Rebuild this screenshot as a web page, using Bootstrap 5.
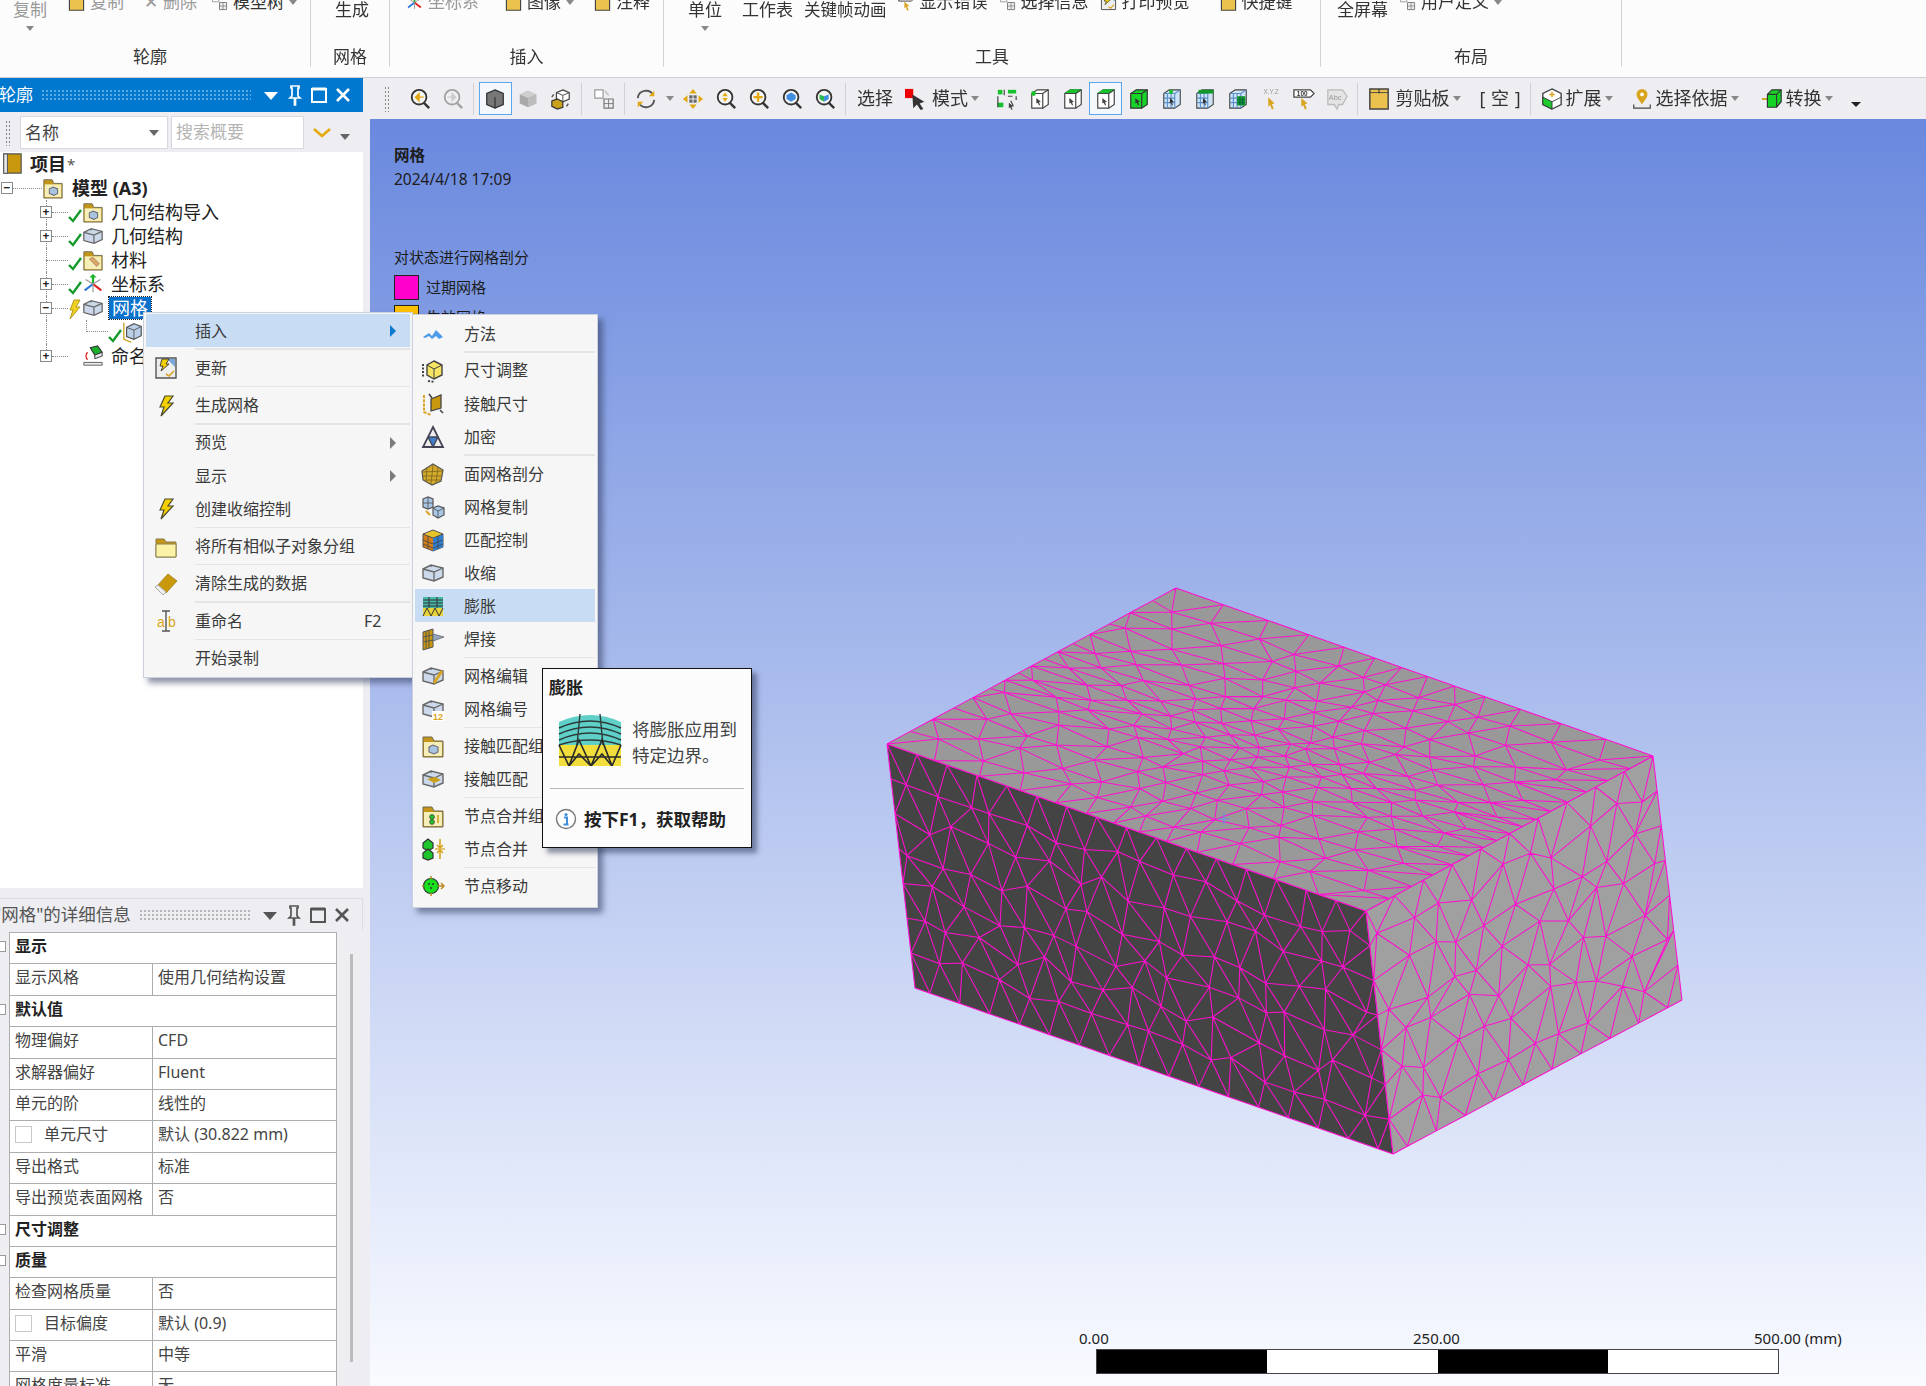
<!DOCTYPE html>
<html lang="zh">
<head>
<meta charset="UTF-8" />
<title>网格 - Mechanical</title>
<link href="https://cdn.jsdelivr.net/npm/bootstrap@5.3.0/dist/css/bootstrap.min.css" rel="stylesheet">
<style>
  html, body { margin: 0; height: 100%; overflow: hidden; background: #eeeef2; }
  body { font-family: "Noto Sans", "Noto Sans CJK SC", sans-serif; color: #333; }
  .app { position: relative; width: 1926px; height: 1386px; overflow: hidden; filter: blur(.4px); }
  .ic { display: block; width: 22px; height: 22px; flex: none; }

  /* ribbon */
  .ribbon { height: 78px; background: #fcfcfc; border-bottom: 1px solid #cfcfd2; flex: none; }
  .rb-group { height: 67px; border-right: 1.5px solid #d4d4d4; flex: none; position: relative; overflow: hidden; }
  .rb-body { height: 46px; font-size: 17px; line-height: 20px; color: #333; white-space: nowrap; }
  .rb-label { font-size: 17px; line-height: 22px; text-align: center; color: #333; }
  .rb-w1 { width: 311px; }
  .rb-w1 .rb-body { padding-left: 13px; }
  .rb-w1 .rb-label { padding-right: 10px; }
  .rb-w2 { width: 79px; }
  .rb-w2 .rb-body { padding-left: 24px; }
  .rb-w3 { width: 274px; }
  .rb-w3 .rb-body { padding-left: 16px; }
  .rb-w4 { width: 657px; }
  .rb-w4 .rb-body { padding-left: 24px; }
  .rb-w5 { width: 301px; }
  .rb-w5 .rb-body { padding-left: 16px; }
  .rb-big { flex: none; }
  .rb-big.tight { font-size: 16.5px; }
  .rb-big .caret-s { margin: 6px auto 0; display: block; }
  .rb-small { margin-top: -8px; display: flex; align-self: flex-start; align-items: center; gap: 5px; flex: none; }
  .rb-small .ic { width: 17px; height: 17px; }
  .rb-dim { color: #999; }
  .gap-a { margin-left: 21px; }
  .gap-b { margin-left: 20px; }
  .gap-c { margin-left: 11px; }
  .gap-d { margin-left: 26px; }
  .gap-g { margin-left: 14px; }
  .gap-h { margin-left: 30px; }
  .caret-s { display: inline-block; width: 0; height: 0; border-left: 4px solid transparent; border-right: 4px solid transparent; border-top: 5px solid #888; flex: none; }

  /* side panels */
  .side { width: 370px; flex: none; background: #eeeef2; }
  .side-col { width: 363px; }
  .pane-title { height: 34px; background: #0078cf; color: #fff; font-size: 17px; padding-right: 8px; overflow: hidden; }
  .pane-title.light { height: 32px; background: #eeeef2; color: #555; margin-top: 10px; border-top: 1px solid #dcdce4; border-right: 1px solid #dcdce4; }
  .pane-name { margin-left: -1px; white-space: nowrap; }
  .pane-title.light .pane-name { margin-left: -6px; font-size: 17.5px; }
  .grip-h { flex: 1; height: 12px; margin: 0 8px; background-image: radial-gradient(currentColor .7px, transparent .8px); background-size: 4px 4px; opacity: .4; }
  .pane-btn { width: 24px; height: 24px; display: block; flex: none; }
  .search-row { height: 40px; padding: 4px 0 3px 5px; }
  .grip-v { width: 6px; height: 26px; background-image: radial-gradient(#888 .7px, transparent .8px); background-size: 3px 4px; flex: none; }
  .fake-sel { background: #fff; border: 1.5px solid #d8d8e2; height: 33px; font-size: 17px; line-height: 29px; padding: 0 8px 0 4px; color: #444; }
  .fake-sel.pick { width: 148px; margin-left: 9px; }
  .fake-sel.find { width: 133px; margin-left: 3px; color: #b5b5b5; }
  .sel-arrow { border-left: 5px solid transparent; border-right: 5px solid transparent; border-top: 6px solid #666; }
  .tree { height: 736px; background: #fff; font-size: 18px; color: #222; padding-top: 0; overflow: hidden; }
  .tr0, .tr1 { height: 24px; line-height: 24px; display: flex; align-items: center; position: relative; white-space: nowrap; }
  .tr0 b, .tr1 b { font-weight: 700; }
  .star { color: #555; font-size: 15px; margin-left: 1px; }
  .tr-root .ic { margin-left: 1px; margin-right: 7px; }
  .tr-model { padding-left: 1px; }
  .tr-model .dash { width: 29px; }
  .tr-model .ic { margin-right: 8px; }
  .tr1 { padding-left: 40px; }
  .tr1::before { content: ""; position: absolute; left: 46px; top: 0; bottom: 0; border-left: 1px dotted #888; }
  .tr1.last::before { bottom: 12px; }
  .tr1 .ic { margin-right: 7px; }
  .tr1 .chk { width: 14px; height: 14px; margin: 8px 0 0 0; }
  .tr1 .chk.bolt { height: 24px; margin: 2px 0 0 0; }
  .xp { width: 12px; height: 12px; border: 1px solid #888; background: #fff; color: #222; font-size: 12px; line-height: 9px; text-align: center; flex: none; position: relative; z-index: 1; font-weight: 700; }
  .dash { width: 16px; border-top: 1px dotted #888; flex: none; }
  .dash.long { width: 22px; margin-left: 6px; }
  .no-chk { width: 14px; flex: none; }
  .tree-sel { background: #0a72cc; color: #fff; outline: 1px dotted #222; padding: 0 3px; margin-left: -2px; line-height: 22px; }
  .tr1.kid { padding-left: 86px; }
  .kid .bend { width: 22px; height: 12px; border-left: 1px dotted #888; border-bottom: 1px dotted #888; margin-top: -12px; flex: none; }

  /* property table */
  .detail-body { position: relative; overflow: hidden; flex: 1; background: #eeeef2; }
  .prop-wrap { margin: 2px 0 0 9px; }
  .prop-table { width: 328px; table-layout: fixed; margin: 0; font-size: 16px; --bs-table-bg: #fff; --bs-table-border-color: #adadad; border-color: #adadad; }
  .prop-table > tbody > tr > td { height: 31.4px; padding: 0 0 0 5px; line-height: 27px; white-space: nowrap; overflow: hidden; border-width: 1.5px; color: #444; }
  .prop-table > tbody > tr > td.grp { font-weight: 700; color: #222; overflow: visible; position: relative; }
  .prop-c1 { width: 143px; }
  .grp-box { position: absolute; left: -15px; top: 8px; width: 11px; height: 11px; border: 1px solid #999; background: #fff; }
  .chk-row { display: flex; align-items: center; }
  .chk-box { width: 17px; height: 17px; border: 1px solid #c9c9c9; background: #fff; margin-right: 12px; flex: none; }
  .v-scroll { width: 3px; height: 408px; background: #bcbcbc; margin: 24px 0 0 13px; flex: none; }

  /* toolbar */
  .stage { flex: 1; min-width: 0; }
  .toolbar { height: 41px; background: #eeeef2; flex: none; font-size: 18px; color: #333; white-space: nowrap; }
  .tb-i { width: 33px; height: 33px; display: flex; align-items: center; justify-content: center; flex: none; }
  .tb-i.on { outline: 1.5px solid #5aa7f0; outline-offset: -1px; background: #f4f8fd; }
  .tb-sep { width: 1px; height: 32px; background: #d0d0d6; margin: 0 5px 0 3.5px; flex: none; }
  .tb-t { flex: none; }
  .tb-t.pad { padding: 0 6px; }
  .tb-arrow { width: 14px; display: flex; justify-content: center; flex: none; }
  .tb-end { margin: 12px 0 0 15px; border-left: 5px solid transparent; border-right: 5px solid transparent; border-top: 5px solid #222; flex: none; }
  .bk-space { margin-left: 16px; width: 40px; word-spacing: 1px; }
  .pull-a { margin-left: -3px; }
  .gap-e { margin-left: 10px; }
  .gap-f { margin-left: 14px; }
  .gap-i { margin-left: 10px; }

  /* viewport */
  .viewport { position: relative; flex: 1; background: linear-gradient(#6a89de, #f9fbff); overflow: hidden; font-size: 15px; color: #1c1c1c; padding: 24px 0 0 24px; }
  .vp-name { font-size: 15.5px; font-weight: 700; line-height: 24px; }
  .vp-date { font-size: 15.5px; line-height: 24px; }
  .vp-status { margin-top: 55px; line-height: 22px; font-size: 15px; }
  .swatch { width: 25px; height: 25px; border: 1.5px solid #222; flex: none; margin-right: 7px; }
  .swatch.pink { background: #ff00cc; }
  .swatch.amber { background: #ffc000; }
  .legend-row { margin-top: 5px; height: 25px; font-size: 15px; }
  .legend-row.first { margin-top: 7px; }
  .mesh { position: absolute; left: 0; top: 0; width: 100%; height: 100%; }
  .scale-bar { position: absolute; left: 726px; top: 1230px; width: 683px; height: 25px; border: 1px solid #444; display: flex; }
  .seg { flex: 1; }
  .seg.dark { background: #000; }
  .seg.pale { background: #fff; }
  .scale-lbl { position: absolute; top: 1209px; font-size: 15px; line-height: 20px; color: #222; white-space: nowrap; }
  .lb-0 { left: 709px; }
  .lb-1 { left: 1043px; }
  .lb-2 { left: 1384px; }

  /* context menus */
  .cm { position: absolute; margin: 0; padding: 1px 2px; min-width: 0; display: block; background: #f6f6f6; border: 1px solid #cdd1dc; border-radius: 0; box-shadow: 5px 5px 6px rgba(50,60,95,.55); font-size: 16px; color: #3a3a3a; list-style: none; }
  .cm-main { left: 143px; top: 312px; width: 270px; height: 366px; z-index: 5; }
  .cm-sub { left: 412px; top: 314px; width: 186px; height: 594px; z-index: 6; padding-top: 2px; }
  .cm-row { height: 33.2px; display: flex; align-items: center; position: relative; white-space: nowrap; }
  .cm-sub .cm-row { height: 33.1px; }
  .cm-main .cm-row { padding-left: 49px; }
  .cm-sub .cm-row { padding-left: 49px; }
  .cm-row.hot { background: #c8dcf3; }
  .cm-ico { position: absolute; width: 24px; height: 24px; top: 5px; }
  .cm-main .cm-ico { left: 8px; }
  .cm-sub .cm-ico { left: 6px; }
  .cm-more { position: absolute; right: 14px; top: 11px; border-top: 6px solid transparent; border-bottom: 6px solid transparent; border-left: 6px solid #7b7b7b; }
  .hot .cm-more { border-left-color: #0a7ad0; }
  .cm-key { position: absolute; left: 218px; }
  .cm-sep { height: 4.1px; display: flex; align-items: center; margin-left: 49px; }
  .cm-sub .cm-sep { height: 3.8px; margin-left: 49px; }
  .cm-sep::after { content: ""; display: block; width: 100%; height: 1.5px; background: #e5e5e5; }

  /* tooltip */
  .tip { position: absolute; left: 542px; top: 668px; width: 210px; height: 180px; background: #fcfcfc; border: 1.5px solid #111; box-shadow: 5px 5px 5px rgba(50,60,95,.55); z-index: 7; padding: 7px 6px; font-size: 17.5px; color: #444; }
  .tip-title { font-weight: 700; color: #222; line-height: 24px; font-size: 17px; }
  .tip-main { margin: 11px 0 0 9px; gap: 10px; }
  .tip-img { width: 64px; height: 55px; flex: none; display: block; }
  .tip-text { line-height: 26px; margin-top: 5px; }
  .tip-line { border-top: 1.5px solid #b9b9b9; margin: 20px 1px 0; }
  .tip-help { margin: 18px 0 0 6px; font-weight: 700; color: #222; font-size: 17.5px; line-height: 24px; white-space: nowrap; gap: 7px; }
  .tip-help svg { width: 22px; height: 22px; flex: none; }
</style>
</head>
<body>

<!-- icon sheet -->
<svg width="0" height="0" class="d-none">
  <defs>
    <symbol id="i-check" viewBox="0 0 14 14"><path d="M1 8l4 4 8-11" fill="none" stroke="#159a2c" stroke-width="2.4"/></symbol>
    <symbol id="i-bolt" viewBox="0 0 24 24"><path d="M11 2h8l-5 7h5L7 22l3-9H6z" fill="#f5d000" stroke="#4a4a30" stroke-width="1.2"/></symbol>
    <symbol id="i-boltsm" viewBox="0 0 14 24"><path d="M6 3h6L8 10h4L2 22l3-9H2z" fill="#f0d020" stroke="#b59a20" stroke-width="1"/></symbol>
    <symbol id="i-box" viewBox="0 0 24 24"><path d="M2 8l8-4 12 3v9l-9 4-11-3z" fill="#cbd9ea" stroke="#666" stroke-width="1.4"/><path d="M2 8l11 3 9-4M13 11v9M10 4v2" fill="none" stroke="#666" stroke-width="1.3"/></symbol>
    <symbol id="i-cube" viewBox="0 0 24 24"><path d="M12 2l9 4v12l-9 4-9-4V6z" fill="#c9d8ea" stroke="#666" stroke-width="1.4"/><path d="M3 6l9 4 9-4M12 10v12" fill="none" stroke="#666" stroke-width="1.3"/></symbol>
    <symbol id="i-cube-dk" viewBox="0 0 24 24"><path d="M12 2l9 4v12l-9 4-9-4V6z" fill="#777" stroke="#333" stroke-width="1.4"/><path d="M3 6l9 4 9-4v0l-9 4z" fill="#aaa"/><path d="M12 10v12" stroke="#333" stroke-width="1.3"/></symbol>
    <symbol id="i-cube-gr" viewBox="0 0 24 24"><path d="M12 3l9 4v10l-9 4-9-4V7z" fill="#a9a9a9"/><path d="M3 7l9 4 9-4-9-4z" fill="#cfcfcf"/><path d="M12 11v10l9-4V7z" fill="#bcbcbc"/></symbol>
    <symbol id="i-cube-set" viewBox="0 0 24 24"><path d="M14 2l7 3v7l-7 3-7-3V5z" fill="#fff" stroke="#444" stroke-width="1.3"/><path d="M7 5l7 3 7-3M14 8v7" fill="none" stroke="#444"/><path d="M8 12l6 3v6l-6 2-6-3v-6z" fill="#c9a11a" stroke="#333" stroke-width="1.3"/><path d="M20 17l-2 3M4 7L2 10" stroke="#555" stroke-width="1.6"/></symbol>
    <symbol id="i-folder" viewBox="0 0 24 24"><path d="M2 7V4h8l2 3h10v15H2z" fill="#c4951a" stroke="#8a7a45"/><path d="M2 9h20v13H2z" fill="#fbf2a8" stroke="#8a8050"/></symbol>
    <symbol id="i-foldbox" viewBox="0 0 24 24"><path d="M2 7V3h9l2 4h9v16H2z" fill="#c4951a" stroke="#6f6a50"/><path d="M3 8h18v14H3z" fill="#f6eeb8"/><path d="M8 13l4-2 5 2v5l-4 2-5-2z" fill="#a9c4e0" stroke="#667" stroke-width="1.1"/></symbol>
    <symbol id="i-foldpen" viewBox="0 0 24 24"><path d="M2 7V3h9l2 4h9v16H2z" fill="#c4951a" stroke="#6f6a50"/><path d="M3 8h18v14H3z" fill="#f6eeb8"/><path d="M8 11l8 8 3-3-7-7z" fill="#d9a56a" stroke="#a98050" stroke-width=".8"/></symbol>
    <symbol id="i-foldnode" viewBox="0 0 24 24"><path d="M2 7V3h9l2 4h9v16H2z" fill="#c4951a" stroke="#6f6a50"/><path d="M3 8h18v14H3z" fill="#f6eeb8"/><circle cx="11" cy="13" r="2.4" fill="#21c32b" stroke="#333" stroke-width=".7"/><circle cx="11" cy="18" r="2.4" fill="#21c32b" stroke="#333" stroke-width=".7"/><path d="M17 11v8" stroke="#c9a11a" stroke-width="1.5"/></symbol>
    <symbol id="i-book" viewBox="0 0 22 24"><path d="M2 1h19v21H2z" fill="#c9980c" stroke="#555" stroke-width="1.3"/><path d="M2 1h4v21H2z" fill="#e9e9e9" stroke="#555" stroke-width="1.1"/></symbol>
    <symbol id="i-axes" viewBox="0 0 24 24"><path d="M12 12V3" stroke="#19b32b" stroke-width="2.4"/><path d="M8 5l4-4 4 4z" fill="#19b32b"/><path d="M12 12L3 19" stroke="#2f78e0" stroke-width="2.4"/><path d="M12 12l9 7" stroke="#e02222" stroke-width="2.4"/><path d="M12 12L4 7M12 12l8-5M12 12v9" stroke="#999" stroke-width="1.3"/></symbol>
    <symbol id="i-named" viewBox="0 0 24 24"><path d="M9 3l8-2 5 7-8 3z" fill="#19b32b" stroke="#333" stroke-width="1.2"/><path d="M14 11l8-3v4l-8 3z" fill="#e8e8e8" stroke="#333"/><path d="M2 19h20v3H2z" fill="#eee" stroke="#555"/><path d="M6 8a6 6 0 0 0 0 8" fill="none" stroke="#d22" stroke-width="1.6"/></symbol>
    <symbol id="i-childmesh" viewBox="0 0 24 24"><path d="M2 2v18l8 3" fill="none" stroke="#c9a11a" stroke-width="1.4"/><path d="M13 3l8 3v10l-8 4-8-3V7z" fill="#b9d0e8" stroke="#555" stroke-width="1.3"/><path d="M5 7l8 3 8-4M13 10v10" fill="none" stroke="#555"/></symbol>

    <symbol id="i-mag" viewBox="0 0 24 24"><circle cx="11" cy="10" r="8" fill="#f5f5f5" stroke="#333" stroke-width="2"/><path d="M16 16l6 6" stroke="#333" stroke-width="2.6"/></symbol>
    <symbol id="i-zoom-l" viewBox="0 0 24 24"><use href="#i-mag"/><path d="M16 10H8M11 6l-4 4 4 4z" fill="#e2a80e" stroke="#e2a80e" stroke-width="1.4"/></symbol>
    <symbol id="i-zoom-r" viewBox="0 0 24 24"><g opacity=".4"><use href="#i-mag"/><path d="M6 10h8M11 6l4 4-4 4z" fill="#999" stroke="#999" stroke-width="1.4"/></g></symbol>
    <symbol id="i-zoom-ud" viewBox="0 0 24 24"><use href="#i-mag"/><path d="M11 5l3 4H8zM11 15l3-4H8z" fill="#e2a80e"/></symbol>
    <symbol id="i-zoom-plus" viewBox="0 0 24 24"><use href="#i-mag"/><path d="M11 5v10M6 10h10" stroke="#e2a80e" stroke-width="2.6"/></symbol>
    <symbol id="i-zoom-blue" viewBox="0 0 24 24"><use href="#i-mag"/><path d="M11 5l5 3v4l-5 3-5-3V8z" fill="#3f8ee0"/></symbol>
    <symbol id="i-zoom-green" viewBox="0 0 24 24"><use href="#i-mag"/><path d="M6 7l5 2v6l-5-3z" fill="#2cb84a"/><path d="M16 7l-5 2v6l5-3z" fill="#3f8ee0"/></symbol>
    <symbol id="i-views" viewBox="0 0 24 24"><path d="M2 2h9v9H2z" fill="#fff" stroke="#999" stroke-width="1.3"/><path d="M12 12h10v10H12z" fill="#eee" stroke="#777" stroke-width="1.3"/><path d="M17 12v10M12 17h10" stroke="#777"/><path d="M13 3l4 5" stroke="#bbb" stroke-width="1.4"/></symbol>
    <symbol id="i-rotate" viewBox="0 0 24 24"><path d="M3 11a9 9 0 0 1 17-3" fill="none" stroke="#555" stroke-width="2"/><path d="M21 13a9 9 0 0 1-17 3" fill="none" stroke="#555" stroke-width="2"/><path d="M21 3v6h-6zM3 21v-6h6z" fill="#e2a80e"/></symbol>
    <symbol id="i-pan" viewBox="0 0 24 24"><path d="M12 1l4 5H8zM12 23l4-5H8zM1 12l5-4v8zM23 12l-5-4v8z" fill="#e2a80e"/><path d="M8 8h8v8H8z" fill="#666"/><path d="M12 8v8M8 12h8" stroke="#fff"/></symbol>
    <symbol id="i-cursor" viewBox="0 0 24 24"><path d="M0 1h9v10H0z" fill="#ee0000"/><path d="M8 7l13 8-5 2 4 6-3 1-4-6-4 4z" fill="#333"/></symbol>
    <symbol id="i-sel-v" viewBox="0 0 24 24"><path d="M2 2h5v5H2z" fill="#16c22b"/><path d="M13 2h9v4h-9z" fill="#16c22b"/><path d="M2 16h6v5H2z" fill="#16c22b"/><path d="M2 9v12M9 2v6M16 14l3 6M22 9v4M13 9h5" stroke="#444" stroke-width="1.3" fill="none"/><path d="M14 16l5 4-2 .5 1 3-1 .5-1.5-3-1.5 1z" fill="#444"/></symbol>
    <symbol id="i-sel-e" viewBox="0 0 24 24"><path d="M3 6l6-4h12v16l-6 4H3z" fill="#fff" stroke="#444" stroke-width="1.3"/><path d="M3 6h12v16M15 6l6-4" fill="none" stroke="#444" stroke-width="1.3"/><circle cx="5" cy="6" r="2.6" fill="#16c22b"/><path d="M8 11l5 4-2 .5 1 3-1 .5-1.5-3-1.5 1z" fill="#444"/></symbol>
    <symbol id="i-sel-f" viewBox="0 0 24 24"><path d="M3 6l6-4h12v16l-6 4H3z" fill="#fff" stroke="#444" stroke-width="1.3"/><path d="M3 6l6-4h12l-6 4z" fill="#16c22b" stroke="#16c22b"/><path d="M3 6h12v16M15 6l6-4" fill="none" stroke="#444" stroke-width="1.3"/><path d="M8 11l5 4-2 .5 1 3-1 .5-1.5-3-1.5 1z" fill="#444"/></symbol>
    <symbol id="i-sel-b" viewBox="0 0 24 24"><path d="M3 6l6-4h12v16l-6 4H3z" fill="#16d428" stroke="#333" stroke-width="1.3"/><path d="M3 6h12v16M15 6l6-4" fill="none" stroke="#333" stroke-width="1.3"/><path d="M8 11l5 4-2 .5 1 3-1 .5-1.5-3-1.5 1z" fill="#333"/></symbol>
    <symbol id="i-sel-m1" viewBox="0 0 24 24"><path d="M3 6l6-4h12v16l-6 4H3z" fill="#cfe3f6" stroke="#444" stroke-width="1.2"/><path d="M7 6v16M11 6v16M3 11h12M3 16h12M15 6l6-4M15 6v16M3 6h12" fill="none" stroke="#5b8fc9" stroke-width="1.2"/><path d="M9 2h4v4H9z" fill="#16c22b"/><path d="M10 11l4 4-2 .5 1 3-1 .5-1-3-1.5 1z" fill="#333"/></symbol>
    <symbol id="i-sel-m2" viewBox="0 0 24 24"><path d="M3 6l6-4h12v16l-6 4H3z" fill="#cfe3f6" stroke="#444" stroke-width="1.2"/><path d="M7 6v16M11 6v16M3 11h12M3 16h12M15 6l6-4M15 6v16M3 6h12" fill="none" stroke="#5b8fc9" stroke-width="1.2"/><path d="M5 2h16v4H5z" fill="#0f9a25"/><path d="M10 11l4 4-2 .5 1 3-1 .5-1-3-1.5 1z" fill="#333"/></symbol>
    <symbol id="i-sel-m3" viewBox="0 0 24 24"><path d="M3 6l6-4h12v16l-6 4H3z" fill="#cfe3f6" stroke="#444" stroke-width="1.2"/><path d="M7 6v16M11 6v16M3 11h12M3 16h12M15 6l6-4M15 6v16M3 6h12" fill="none" stroke="#5b8fc9" stroke-width="1.2"/><path d="M11 9h9v10h-9z" fill="#0f9a25"/><path d="M14 9v10M17 9v10M11 13h9M11 16h9" stroke="#055" stroke-width=".7"/></symbol>
    <symbol id="i-xyz" viewBox="0 0 24 24"><text x="12" y="7" font-size="7" text-anchor="middle" font-family="Liberation Sans, sans-serif" fill="#999">X.Y.Z</text><path d="M9 10l7 7-3 .5 2 5-2 1-2-5-2 2z" fill="#d9a520"/></symbol>
    <symbol id="i-tag100" viewBox="0 0 24 24"><path d="M1 2h18l4 4-4 4H1z" fill="#fff" stroke="#444" stroke-width="1.4"/><text x="10" y="8.5" font-size="7" font-weight="700" text-anchor="middle" font-family="Liberation Sans, sans-serif" fill="#333">100</text><path d="M9 11l7 6-3 .5 2 5-2 1-2-5-2 2z" fill="#d9a520"/></symbol>
    <symbol id="i-abc" viewBox="0 0 24 24"><path d="M2 2h16l5 7-5 9h-4l-2 5-3-5H2z" fill="#e4e4e4" stroke="#bbb" stroke-width="1.4"/><text x="10" y="13" font-size="8" text-anchor="middle" font-family="Liberation Sans, sans-serif" fill="#999">Abc</text></symbol>
    <symbol id="i-clip" viewBox="0 0 24 24"><path d="M2 1h20v22H2z" fill="#ecc24e" stroke="#444" stroke-width="1.6"/><path d="M2 5h20" stroke="#444" stroke-width="1"/><path d="M12 1v5" stroke="#444" stroke-width="1.4"/></symbol>
    <symbol id="i-ext" viewBox="0 0 24 24"><path d="M12 1l10 5v12l-10 5-10-5V6z" fill="#fff" stroke="#444" stroke-width="1.5"/><path d="M2 10l10 5v8l-10-5z" fill="#1fcc2e" stroke="#333"/><path d="M12 15l10-5" stroke="#444"/><path d="M12 4v6M9 7h6" stroke="#d9a520" stroke-width="1.6"/></symbol>
    <symbol id="i-pin" viewBox="0 0 24 24"><path d="M12 1a6 6 0 0 1 6 6c0 4-4 7-6 11-2-4-6-7-6-11a6 6 0 0 1 6-6z" fill="#d9a520"/><circle cx="12" cy="7" r="2" fill="#fff"/><path d="M3 18v4h18v-4" fill="none" stroke="#444" stroke-width="1.3"/></symbol>
    <symbol id="i-conv" viewBox="0 0 24 24"><path d="M1 12h6" stroke="#c9a11a" stroke-width="2"/><path d="M7 7l5-5h10v13l-5 6H7z" fill="#15d426" stroke="#333" stroke-width="1.3"/><path d="M7 7h10v14M17 7l5-5" fill="none" stroke="#333" stroke-width="1.2"/></symbol>
    <symbol id="i-chev" viewBox="0 0 20 12"><path d="M2 2l8 7 8-7" fill="none" stroke="#e5a90e" stroke-width="2.6"/></symbol>

    <symbol id="i-update" viewBox="0 0 24 24"><path d="M2 2h20v20H2z" fill="#eee" stroke="#555" stroke-width="1.4"/><path d="M13 3h8v8z" fill="#78a8dc"/><path d="M8 3h7l-3 5h3L7 15l2-5H6z" fill="#f5d000" stroke="#333" stroke-width=".9"/><path d="M12 18l3 2 5-5" fill="none" stroke="#d9a520" stroke-width="1.6"/></symbol>
    <symbol id="i-eraser" viewBox="0 0 24 24"><path d="M14 2l9 7-11 12-9-7z" fill="#c9980c" stroke="#a98a2a"/><path d="M1 15l3-2 8 7-3 3z" fill="#eee" stroke="#aaa"/></symbol>
    <symbol id="i-rename" viewBox="0 0 24 24"><text x="3" y="18" font-size="14" font-family="Liberation Sans, sans-serif" fill="#d9a520">a</text><text x="14" y="18" font-size="14" font-family="Liberation Sans, sans-serif" fill="#d9a520">b</text><path d="M8 2h8M8 22h8M12 2v20" stroke="#555" stroke-width="1.4"/></symbol>
    <symbol id="i-method" viewBox="0 0 24 24"><path d="M2 15l6-4 3 3 4-6 7 7-4 2-3-3-4 3-3-3-4 2z" fill="#4a9bea"/></symbol>
    <symbol id="i-sizing" viewBox="0 0 24 24"><path d="M13 2l8 4v10l-8 4-7-4V6z" fill="#f7e463" stroke="#444" stroke-width="1.4"/><path d="M6 6l7 4 8-4M13 10v10" fill="none" stroke="#444"/><path d="M2 5v14M7 22l7 1" stroke="#444" stroke-width="2" stroke-dasharray="2 1.5"/></symbol>
    <symbol id="i-csize" viewBox="0 0 24 24"><path d="M3 3v17l7 3" fill="none" stroke="#d9a520" stroke-width="2" stroke-dasharray="3 1.2"/><path d="M10 7l10-4v13l-10 3z" fill="#c9980c" stroke="#444" stroke-width="1.3"/><path d="M8 2l3 4M19 18l3 3" stroke="#444" stroke-width="1.6"/></symbol>
    <symbol id="i-refine" viewBox="0 0 24 24"><path d="M12 2l10 20H2z" fill="#eee" stroke="#445" stroke-width="1.8"/><path d="M7 12h10l-5 10z" fill="#3f7ec8"/><path d="M7 12h10M7 12l5 10 5-10" fill="none" stroke="#445" stroke-width="1.3"/></symbol>
    <symbol id="i-face" viewBox="0 0 24 24"><path d="M12 2l10 6-2 11-9 4-9-5-1-9z" fill="#d4aa2a" stroke="#555" stroke-width="1.2"/><path d="M6 5l-1 15M12 3l-2 19M17 5l-2 16M2 10l20-1M2 14l19 0M4 18l15 0" stroke="#7a6420" stroke-width=".8"/></symbol>
    <symbol id="i-copy" viewBox="0 0 24 24"><path d="M2 4l5-2 5 2v8l-5 2-5-2z" fill="#a9c8e8" stroke="#555" stroke-width="1.2"/><path d="M12 13l5-2 6 2v7l-6 3-5-3z" fill="#a9c8e8" stroke="#555" stroke-width="1.2"/><path d="M7 2v12M12 13l5 3 6-3M17 16v7M2 8h10" fill="none" stroke="#555" stroke-width=".9"/><path d="M5 16l4 4" stroke="#d9a520" stroke-width="2"/></symbol>
    <symbol id="i-match" viewBox="0 0 24 24"><path d="M2 6v13l10 4 10-4V6z" fill="#d07d1a" stroke="#555"/><path d="M12 10v13l10-4V6z" fill="#2f7ed0"/><path d="M2 6l10-4 10 4-10 4z" fill="#e8c42a" stroke="#555"/><path d="M7 8v13M17 8v13M2 12l10 4 10-4M2 16l10 4 10-4" stroke="#444" stroke-width=".8" fill="none"/></symbol>
    <symbol id="i-inflate" viewBox="0 0 24 24"><path d="M2 3h20v11H2z" fill="#45b8a8"/><path d="M2 6h20M2 9h20M2 12h20M8 3v11M16 3v11" stroke="#333" stroke-width="1"/><path d="M2 14h20v8H2z" fill="#e9d43a"/><path d="M2 22l4-8 4 8 4-8 4 8 4-8" fill="none" stroke="#333" stroke-width="1"/></symbol>
    <symbol id="i-weld" viewBox="0 0 24 24"><path d="M2 5l10-3v18L2 23z" fill="#c9980c" stroke="#555"/><path d="M5 4v18M8 3v18M2 10l10-2M2 15l10-2" stroke="#555"/><path d="M12 7l11 3-11 4z" fill="#8fa8bf" stroke="#666" stroke-width=".8"/></symbol>
    <symbol id="i-medit" viewBox="0 0 24 24"><use href="#i-box"/><path d="M13 19l8-12" stroke="#d9a520" stroke-width="3"/></symbol>
    <symbol id="i-mnum" viewBox="0 0 24 24"><use href="#i-box"/><path d="M11 14h13v10H11z" fill="#fff"/><text x="17" y="23" font-size="9" font-weight="700" text-anchor="middle" font-family="Liberation Sans, sans-serif" fill="#d9a520">12</text></symbol>
    <symbol id="i-cmatch" viewBox="0 0 24 24"><use href="#i-box"/><path d="M6 12l8-2 6 3-7 3z" fill="#c9a11a"/></symbol>
    <symbol id="i-nmerge" viewBox="0 0 24 24"><path d="M7 2l5 4v5l-5 3-5-3V6z" fill="#1fc62b" stroke="#333" stroke-width="1.2"/><path d="M7 12l5 4v5l-5 2-5-2v-5z" fill="#1fc62b" stroke="#333" stroke-width="1.2"/><path d="M19 2v8M16 8l3 3 3-3M19 22v-8M16 16l3-3 3 3" fill="none" stroke="#d9a520" stroke-width="1.6"/><path d="M14 12h10" stroke="#d9a520" stroke-width="1.2"/></symbol>
    <symbol id="i-nmove" viewBox="0 0 24 24"><circle cx="10" cy="12" r="7.5" fill="#18e01e" stroke="#333" stroke-width="1.2"/><path d="M10 2v3M10 19v3M1 12h2M17 12h6M20 9l3 3-3 3" fill="none" stroke="#b98a20" stroke-width="1.5"/><circle cx="8" cy="10" r="1" fill="#333"/><circle cx="12" cy="10" r="1" fill="#333"/><circle cx="10" cy="14" r="1" fill="#333"/></symbol>

    <symbol id="i-pnl-arrow" viewBox="0 0 24 24"><path d="M5 9h14l-7 8z" fill="currentColor"/></symbol>
    <symbol id="i-pnl-pin" viewBox="0 0 24 24"><path d="M8 3h8v2h-1v8l2 2H7l2-2V5H8zM11.5 15h1v7h-1z" fill="none" stroke="currentColor" stroke-width="1.7"/></symbol>
    <symbol id="i-pnl-max" viewBox="0 0 24 24"><path d="M5 6h14v13H5z" fill="none" stroke="currentColor" stroke-width="2"/><path d="M5 6h14" stroke="currentColor" stroke-width="3"/></symbol>
    <symbol id="i-pnl-x" viewBox="0 0 24 24"><path d="M6 6l12 12M18 6L6 18" stroke="currentColor" stroke-width="2.6"/></symbol>
  </defs>
</svg>

<div class="app d-flex flex-column">

  <!-- ribbon, scrolled off at the top in the shot -->
  <header class="ribbon d-flex">
    <div class="rb-group rb-w1">
      <div class="rb-body d-flex">
        <div class="rb-big rb-dim">复制<span class="caret-s"></span></div>
        <div class="rb-small rb-dim gap-a"><svg class="ic"><use href="#i-clip"/></svg>复制</div>
        <div class="rb-small rb-dim gap-b"><span>✕</span>删除</div>
        <div class="rb-small gap-g"><svg class="ic"><use href="#i-views"/></svg>模型树<span class="caret-s"></span></div>
      </div>
      <div class="rb-label">轮廓</div>
    </div>
    <div class="rb-group rb-w2">
      <div class="rb-body"><div class="rb-big">生成</div></div>
      <div class="rb-label">网格</div>
    </div>
    <div class="rb-group rb-w3">
      <div class="rb-body d-flex">
        <div class="rb-small rb-dim"><svg class="ic"><use href="#i-axes"/></svg>坐标系</div>
        <div class="rb-small gap-d"><svg class="ic"><use href="#i-clip"/></svg>图像<span class="caret-s"></span></div>
        <div class="rb-small gap-b"><svg class="ic"><use href="#i-clip"/></svg>注释</div>
      </div>
      <div class="rb-label">插入</div>
    </div>
    <div class="rb-group rb-w4">
      <div class="rb-body d-flex">
        <div class="rb-big">单位<span class="caret-s"></span></div>
        <div class="rb-big gap-b">工作表</div>
        <div class="rb-big tight gap-c">关键帧动画</div>
        <div class="rb-small gap-c"><svg class="ic"><use href="#i-tag100"/></svg>显示错误</div>
        <div class="rb-small gap-c"><svg class="ic"><use href="#i-views"/></svg>选择信息</div>
        <div class="rb-small gap-c"><svg class="ic"><use href="#i-update"/></svg>打印预览</div>
        <div class="rb-small gap-h"><svg class="ic"><use href="#i-clip"/></svg>快捷键</div>
      </div>
      <div class="rb-label">工具</div>
    </div>
    <div class="rb-group rb-w5">
      <div class="rb-body d-flex">
        <div class="rb-big">全屏幕</div>
        <div class="rb-small gap-c"><svg class="ic"><use href="#i-views"/></svg>用户定义<span class="caret-s"></span></div>
      </div>
      <div class="rb-label">布局</div>
    </div>
  </header>

  <div class="d-flex flex-grow-1" style="min-height:0">
    <!-- left side: outline + details -->
    <aside class="side d-flex flex-column">
      <div class="side-col d-flex flex-column h-100">
        <div class="pane-title d-flex align-items-center">
          <span class="pane-name">轮廓</span>
          <span class="grip-h"></span>
          <svg class="pane-btn"><use href="#i-pnl-arrow"/></svg>
          <svg class="pane-btn"><use href="#i-pnl-pin"/></svg>
          <svg class="pane-btn"><use href="#i-pnl-max"/></svg>
          <svg class="pane-btn"><use href="#i-pnl-x"/></svg>
        </div>
        <div class="search-row d-flex align-items-center">
          <span class="grip-v"></span>
          <div class="fake-sel pick d-flex align-items-center justify-content-between">名称<span class="sel-arrow"></span></div>
          <div class="fake-sel find">搜索概要</div>
          <svg class="ms-2" width="20" height="12"><use href="#i-chev"/></svg>
          <span class="sel-arrow ms-2 mt-2"></span>
        </div>
        <div class="tree">
          <div class="tr0 tr-root"><svg class="ic"><use href="#i-book"/></svg><b>项目</b><span class="star">*</span></div>
          <div class="tr0 tr-model"><span class="xp">&minus;</span><span class="dash"></span><svg class="ic"><use href="#i-foldbox"/></svg><b>模型 (A3)</b></div>
          <div class="tr1"><span class="xp">+</span><span class="dash"></span><svg class="ic chk"><use href="#i-check"/></svg><svg class="ic"><use href="#i-foldbox"/></svg>几何结构导入</div>
          <div class="tr1"><span class="xp">+</span><span class="dash"></span><svg class="ic chk"><use href="#i-check"/></svg><svg class="ic"><use href="#i-box"/></svg>几何结构</div>
          <div class="tr1"><span class="dash long"></span><svg class="ic chk"><use href="#i-check"/></svg><svg class="ic"><use href="#i-foldpen"/></svg>材料</div>
          <div class="tr1"><span class="xp">+</span><span class="dash"></span><svg class="ic chk"><use href="#i-check"/></svg><svg class="ic"><use href="#i-axes"/></svg>坐标系</div>
          <div class="tr1"><span class="xp">&minus;</span><span class="dash"></span><svg class="ic chk bolt"><use href="#i-boltsm"/></svg><svg class="ic"><use href="#i-box"/></svg><span class="tree-sel">网格</span></div>
          <div class="tr1 kid"><span class="bend"></span><svg class="ic chk"><use href="#i-check"/></svg><svg class="ic"><use href="#i-childmesh"/></svg></div>
          <div class="tr1 last"><span class="xp">+</span><span class="dash"></span><span class="no-chk"></span><svg class="ic"><use href="#i-named"/></svg>命名选择</div>
        </div>

        <div class="pane-title light d-flex align-items-center">
          <span class="pane-name">"网格"的详细信息</span>
          <span class="grip-h"></span>
          <svg class="pane-btn"><use href="#i-pnl-arrow"/></svg>
          <svg class="pane-btn"><use href="#i-pnl-pin"/></svg>
          <svg class="pane-btn"><use href="#i-pnl-max"/></svg>
          <svg class="pane-btn"><use href="#i-pnl-x"/></svg>
        </div>
        <div class="detail-body d-flex">
          <div class="prop-wrap">
            <table class="table table-bordered prop-table">
              <colgroup><col class="prop-c1"><col></colgroup>
              <tbody>
                <tr><td colspan="2" class="grp"><span class="grp-box"></span>显示</td></tr>
                <tr><td>显示风格</td><td>使用几何结构设置</td></tr>
                <tr><td colspan="2" class="grp"><span class="grp-box"></span>默认值</td></tr>
                <tr><td>物理偏好</td><td>CFD</td></tr>
                <tr><td>求解器偏好</td><td>Fluent</td></tr>
                <tr><td>单元的阶</td><td>线性的</td></tr>
                <tr><td><div class="chk-row"><span class="chk-box"></span>单元尺寸</div></td><td>默认 (30.822 mm)</td></tr>
                <tr><td>导出格式</td><td>标准</td></tr>
                <tr><td>导出预览表面网格</td><td>否</td></tr>
                <tr><td colspan="2" class="grp"><span class="grp-box"></span>尺寸调整</td></tr>
                <tr><td colspan="2" class="grp"><span class="grp-box"></span>质量</td></tr>
                <tr><td>检查网格质量</td><td>否</td></tr>
                <tr><td><div class="chk-row"><span class="chk-box"></span>目标偏度</div></td><td>默认 (0.9)</td></tr>
                <tr><td>平滑</td><td>中等</td></tr>
                <tr><td>网格度量标准</td><td>无</td></tr>
              </tbody>
            </table>
          </div>
          <div class="v-scroll"></div>
        </div>
      </div>
    </aside>

    <main class="stage d-flex flex-column">
      <!-- graphics toolbar -->
      <div class="toolbar d-flex align-items-center">
        <span class="tb-i"><span class="grip-v"></span></span>
        <span class="tb-i"><svg class="ic"><use href="#i-zoom-l"/></svg></span>
        <span class="tb-i"><svg class="ic"><use href="#i-zoom-r"/></svg></span>
        <span class="tb-sep"></span>
        <span class="tb-i on"><svg class="ic"><use href="#i-cube-dk"/></svg></span>
        <span class="tb-i"><svg class="ic"><use href="#i-cube-gr"/></svg></span>
        <span class="tb-i"><svg class="ic"><use href="#i-cube-set"/></svg></span>
        <span class="tb-sep"></span>
        <span class="tb-i"><svg class="ic"><use href="#i-views"/></svg></span>
        <span class="tb-sep"></span>
        <span class="tb-i"><svg class="ic"><use href="#i-rotate"/></svg></span>
        <span class="tb-arrow"><span class="caret-s"></span></span>
        <span class="tb-i"><svg class="ic"><use href="#i-pan"/></svg></span>
        <span class="tb-i"><svg class="ic"><use href="#i-zoom-ud"/></svg></span>
        <span class="tb-i"><svg class="ic"><use href="#i-zoom-plus"/></svg></span>
        <span class="tb-i"><svg class="ic"><use href="#i-zoom-blue"/></svg></span>
        <span class="tb-i"><svg class="ic"><use href="#i-zoom-green"/></svg></span>
        <span class="tb-sep"></span>
        <span class="tb-t pad">选择</span>
        <span class="tb-i"><svg class="ic"><use href="#i-cursor"/></svg></span>
        <span class="tb-t">模式</span>
        <span class="tb-arrow"><span class="caret-s"></span></span>
        <span class="tb-i ms-2"><svg class="ic"><use href="#i-sel-v"/></svg></span>
        <span class="tb-i"><svg class="ic"><use href="#i-sel-e"/></svg></span>
        <span class="tb-i"><svg class="ic"><use href="#i-sel-f"/></svg></span>
        <span class="tb-i on"><svg class="ic"><use href="#i-sel-f"/></svg></span>
        <span class="tb-i"><svg class="ic"><use href="#i-sel-b"/></svg></span>
        <span class="tb-i"><svg class="ic"><use href="#i-sel-m1"/></svg></span>
        <span class="tb-i"><svg class="ic"><use href="#i-sel-m2"/></svg></span>
        <span class="tb-i"><svg class="ic"><use href="#i-sel-m3"/></svg></span>
        <span class="tb-i"><svg class="ic"><use href="#i-xyz"/></svg></span>
        <span class="tb-i"><svg class="ic"><use href="#i-tag100"/></svg></span>
        <span class="tb-i"><svg class="ic"><use href="#i-abc"/></svg></span>
        <span class="tb-sep"></span>
        <span class="tb-i"><svg class="ic"><use href="#i-clip"/></svg></span>
        <span class="tb-t">剪贴板</span>
        <span class="tb-arrow"><span class="caret-s"></span></span>
        <span class="tb-t bk-space">[ 空 ]</span>
        <span class="tb-sep gap-e"></span>
        <span class="tb-i"><svg class="ic"><use href="#i-ext"/></svg></span>
        <span class="tb-t pull-a">扩展</span>
        <span class="tb-arrow"><span class="caret-s"></span></span>
        <span class="tb-i gap-i"><svg class="ic"><use href="#i-pin"/></svg></span>
        <span class="tb-t pull-a">选择依据</span>
        <span class="tb-arrow"><span class="caret-s"></span></span>
        <span class="tb-i gap-f"><svg class="ic"><use href="#i-conv"/></svg></span>
        <span class="tb-t pull-a">转换</span>
        <span class="tb-arrow"><span class="caret-s"></span></span>
        <span class="tb-end"></span>
      </div>

      <div class="viewport">
        <svg class="mesh" id="mesh"></svg>
        <div class="position-relative">
          <div class="vp-name">网格</div>
          <div class="vp-date">2024/4/18 17:09</div>
          <div class="vp-status">对状态进行网格剖分</div>
          <div class="legend-row first d-flex align-items-center"><span class="swatch pink"></span>过期网格</div>
          <div class="legend-row d-flex align-items-center"><span class="swatch amber"></span>生效网格</div>
        </div>
        <span class="scale-lbl lb-0">0.00</span>
        <span class="scale-lbl lb-1">250.00</span>
        <span class="scale-lbl lb-2">500.00 (mm)</span>
        <div class="scale-bar"><span class="seg dark"></span><span class="seg pale"></span><span class="seg dark"></span><span class="seg pale"></span></div>
      </div>
    </main>
  </div>

  <!-- context menu -->
  <ul class="cm cm-main">
    <li class="cm-row hot">插入<span class="cm-more"></span></li>
    <li class="cm-sep"></li>
    <li class="cm-row"><svg class="cm-ico"><use href="#i-update"/></svg>更新</li>
    <li class="cm-sep"></li>
    <li class="cm-row"><svg class="cm-ico"><use href="#i-bolt"/></svg>生成网格</li>
    <li class="cm-sep"></li>
    <li class="cm-row">预览<span class="cm-more"></span></li>
    <li class="cm-row">显示<span class="cm-more"></span></li>
    <li class="cm-row"><svg class="cm-ico"><use href="#i-bolt"/></svg>创建收缩控制</li>
    <li class="cm-sep"></li>
    <li class="cm-row"><svg class="cm-ico"><use href="#i-folder"/></svg>将所有相似子对象分组</li>
    <li class="cm-sep"></li>
    <li class="cm-row"><svg class="cm-ico"><use href="#i-eraser"/></svg>清除生成的数据</li>
    <li class="cm-sep"></li>
    <li class="cm-row"><svg class="cm-ico"><use href="#i-rename"/></svg>重命名<span class="cm-key">F2</span></li>
    <li class="cm-sep"></li>
    <li class="cm-row">开始录制</li>
  </ul>

  <ul class="cm cm-sub">
    <li class="cm-row"><svg class="cm-ico"><use href="#i-method"/></svg>方法</li>
    <li class="cm-sep"></li>
    <li class="cm-row"><svg class="cm-ico"><use href="#i-sizing"/></svg>尺寸调整</li>
    <li class="cm-row"><svg class="cm-ico"><use href="#i-csize"/></svg>接触尺寸</li>
    <li class="cm-row"><svg class="cm-ico"><use href="#i-refine"/></svg>加密</li>
    <li class="cm-sep"></li>
    <li class="cm-row"><svg class="cm-ico"><use href="#i-face"/></svg>面网格剖分</li>
    <li class="cm-row"><svg class="cm-ico"><use href="#i-copy"/></svg>网格复制</li>
    <li class="cm-row"><svg class="cm-ico"><use href="#i-match"/></svg>匹配控制</li>
    <li class="cm-row"><svg class="cm-ico"><use href="#i-box"/></svg>收缩</li>
    <li class="cm-row hot"><svg class="cm-ico"><use href="#i-inflate"/></svg>膨胀</li>
    <li class="cm-row"><svg class="cm-ico"><use href="#i-weld"/></svg>焊接</li>
    <li class="cm-sep"></li>
    <li class="cm-row"><svg class="cm-ico"><use href="#i-medit"/></svg>网格编辑</li>
    <li class="cm-row"><svg class="cm-ico"><use href="#i-mnum"/></svg>网格编号</li>
    <li class="cm-sep"></li>
    <li class="cm-row"><svg class="cm-ico"><use href="#i-foldbox"/></svg>接触匹配组</li>
    <li class="cm-row"><svg class="cm-ico"><use href="#i-cmatch"/></svg>接触匹配</li>
    <li class="cm-sep"></li>
    <li class="cm-row"><svg class="cm-ico"><use href="#i-foldnode"/></svg>节点合并组</li>
    <li class="cm-row"><svg class="cm-ico"><use href="#i-nmerge"/></svg>节点合并</li>
    <li class="cm-sep"></li>
    <li class="cm-row"><svg class="cm-ico"><use href="#i-nmove"/></svg>节点移动</li>
  </ul>

  <!-- tooltip -->
  <div class="tip">
    <div class="tip-title">膨胀</div>
    <div class="tip-main d-flex">
      <svg class="tip-img" viewBox="0 0 64 55">
        <path d="M1 11Q32 -3 63 11V34H1z" fill="#5fd0c8"/>
        <path d="M1 34h62v21H1z" fill="#f1de3c"/>
        <path d="M1 17Q32 3 63 17M1 23Q32 9 63 23M1 29Q32 15 63 29M1 34Q32 24 63 34M22 3l-3 31M42 3l3 31" fill="none" stroke="#2d3a3a" stroke-width="1.4"/>
        <path d="M1 34l10 21 10-26 12 26 11-26 10 26 9-21M1 46h62M11 55l10-12 12 12 11-12 10 12" fill="none" stroke="#2a2a2a" stroke-width="1.6"/>
      </svg>
      <div class="tip-text">将膨胀应用到<br>特定边界。</div>
    </div>
    <div class="tip-line"></div>
    <div class="tip-help d-flex align-items-center">
      <svg viewBox="0 0 22 22"><circle cx="11" cy="11" r="9.5" fill="#fff" stroke="#777" stroke-width="1.4"/><circle cx="11" cy="6.5" r="1.6" fill="#3f8ee0"/><path d="M9 9.5h3v7h1.5M8.5 16.5h5" fill="none" stroke="#3f8ee0" stroke-width="2"/></svg>
      按下F1，获取帮助
    </div>
  </div>
</div>

<script src="https://cdn.jsdelivr.net/npm/bootstrap@5.3.0/dist/js/bootstrap.bundle.min.js"></script>
<script>
// tetra mesh preview: three faces of the block, each a jittered staggered grid
var originX = 370, originY = 119;

function rng(seed) {
  return function () {
    seed = (seed + 0x6D2B79F5) | 0;
    var t = Math.imul(seed ^ (seed >>> 15), 1 | seed);
    t = (t + Math.imul(t ^ (t >>> 7), 61 | t)) ^ t;
    return ((t ^ (t >>> 14)) >>> 0) / 4294967296;
  };
}

function warp(t, a) { return t + a * Math.sin(2 * Math.PI * t) / (2 * Math.PI); }

// corners: a=top-left, b=top-right, c=bottom-left, d=bottom-right
function face(a, b, c, d, nu, nv, jit, bend, fill, seed) {
  var rand = rng(seed), rows = [];
  for (var j = 0; j <= nv; j++) {
    var row = [], odd = j % 2 === 1, v0 = j / nv;
    var count = odd ? nu + 2 : nu + 1;
    for (var i = 0; i < count; i++) {
      var u0 = odd ? (i === 0 ? 0 : i === count - 1 ? 1 : (i - .5) / nu) : i / nu;
      var inner = j > 0 && j < nv && i > 0 && i < count - 1;
      var u = u0 + (inner ? (rand() - .5) * jit / nu : 0);
      var v = v0 + (inner ? (rand() - .5) * jit / nv : 0);
      u = warp(u, bend); v = warp(v, bend);
      var x = (1-u)*(1-v)*a[0] + u*(1-v)*b[0] + (1-u)*v*c[0] + u*v*d[0];
      var y = (1-u)*(1-v)*a[1] + u*(1-v)*b[1] + (1-u)*v*c[1] + u*v*d[1];
      row.push({ x: x, y: y, u: u0 });
    }
    rows.push(row);
  }
  var lines = '';
  function seg(p, q) { lines += 'M' + (p.x-originX).toFixed(1) + ' ' + (p.y-originY).toFixed(1) + 'L' + (q.x-originX).toFixed(1) + ' ' + (q.y-originY).toFixed(1); }
  rows.forEach(function (row, j) {
    for (var i = 0; i < row.length - 1; i++) seg(row[i], row[i+1]);
    if (j === rows.length - 1) return;
    var low = rows[j+1], p = 0, q = 0;
    seg(row[0], low[0]);
    while (p < row.length - 1 || q < low.length - 1) {
      if (q === low.length - 1 || (p < row.length - 1 && row[p+1].u <= low[q+1].u)) p++; else q++;
      seg(row[p], low[q]);
    }
  });
  var poly = [a, b, d, c].map(function (p) { return (p[0]-originX) + ',' + (p[1]-originY); }).join(' ');
  return '<polygon points="' + poly + '" fill="' + fill + '"/><path d="' + lines + '" fill="none" stroke="#ff0fd0" stroke-width="1.05"/>';
}

var left = [887,744], top_ = [1176,588], right = [1653,756], near = [1366,911];
var lowL = [915,988], bottom = [1393,1154], lowR = [1682,1000];

var svg = face(left, near, lowL, bottom, 16, 7, .55, 0, '#444444', 11)
  + face(near, right, bottom, lowR, 10, 7, .55, 0, '#a0a0a0', 23)
  + face(top_, right, left, near, 13, 16, .45, .3, '#999999', 37)
  + '<path d="M' + (1224-originX) + ' ' + (813-originY) + 'v12M' + (1218-originX) + ' ' + (819-originY) + 'h12" stroke="#6f8fe0" stroke-width="1.2"/>';
document.getElementById('mesh').innerHTML = svg;
</script>
</body>
</html>
